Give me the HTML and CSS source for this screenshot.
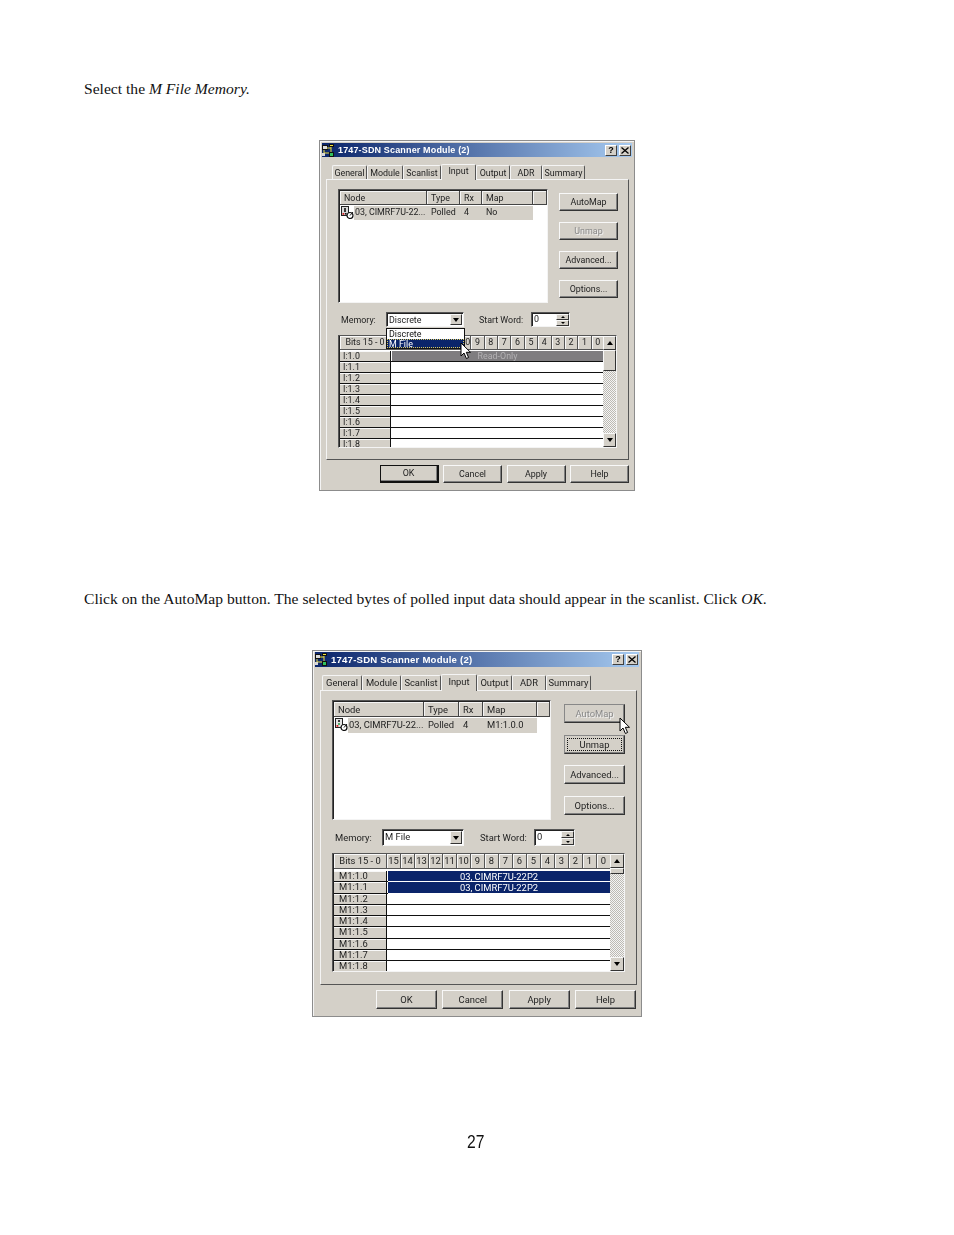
FILE: index.html
```html
<!DOCTYPE html>
<html lang="en">
<head>
<meta charset="utf-8">
<title>Page 27</title>
<link rel="stylesheet" href="styles.css">
</head>
<body>
<p class="para first">Select the <i>M File Memory.</i></p>
<section class="dialog d1">
  <header class="title">
    <svg class="app-icon" viewBox="0 0 14 13"><rect x="0" y="1" width="6" height="5" fill="#111"/><rect x="1" y="2" width="4" height="3" fill="#dcdcdc"/><rect x="7" y="0" width="5" height="3" fill="#111"/><rect x="8" y="1" width="3" height="1" fill="#f0e040"/><path d="M2 6v3h6M9 3v6M5 4h4" stroke="#f0e040" fill="none"/><rect x="7" y="8" width="5" height="5" fill="#111"/><rect x="8" y="9" width="3" height="3" fill="#30c060"/><rect x="0" y="9" width="3" height="3" fill="#d8d8d8"/></svg>
    <span class="title-text">1747-SDN Scanner Module (2)</span>
    <span class="cap">?</span>
    <span class="cap"><svg viewBox="0 0 8 7" class="cap-x"><path d="M0.5 0.5l7 6M7.5 0.5l-7 6" stroke="#000" stroke-width="1.3"/></svg></span>
  </header>
  <nav class="tabs">
    <span class="tab t1">General</span><span class="tab t2">Module</span><span class="tab t3">Scanlist</span><span class="tab t4 active">Input</span><span class="tab t5">Output</span><span class="tab t6">ADR</span><span class="tab t7">Summary</span>
  </nav>
  <div class="panel">
    <div class="top">
      <div class="list">
        <div class="list-head"><span class="lh c1">Node</span><span class="lh c2">Type</span><span class="lh c3">Rx</span><span class="lh c4">Map</span><span class="lh c5"></span></div>
        <div class="list-row">
          <svg class="node-icon" viewBox="0 0 14 13"><rect x="0.5" y="0.5" width="7" height="9" fill="#d8d8d8" stroke="#222"/><rect x="3.2" y="2" width="1.6" height="4" fill="#111"/><rect x="1.5" y="7" width="1.8" height="1.8" fill="#d02020"/><rect x="4" y="7" width="1.6" height="1.6" fill="#111"/><circle cx="9" cy="9.5" r="3" fill="#fff" stroke="#111" stroke-width="1.2"/><path d="M9 9.5l3-3.5" stroke="#111"/></svg>
          <span class="lc c1b">03, CIMRF7U-22...</span><span class="lc c2">Polled</span><span class="lc c3">4</span><span class="lc c4">No</span>
        </div>
      </div>
      <div class="side">
        <span class="btn">AutoMap</span>
        <span class="btn off">Unmap</span>
        <span class="btn">Advanced...</span>
        <span class="btn">Options...</span>
      </div>
    </div>
    <div class="mem">
      <span class="mem-label">Memory:</span>
      <span class="combo"><span class="combo-val">Discrete</span><span class="arrow-btn"><i class="tri down"></i></span></span>
      <span class="word-label">Start Word:</span>
      <span class="spin"><span class="spin-val">0</span><span class="spin-btns"><span class="spin-b"><i class="tri up small"></i></span><span class="spin-b"><i class="tri down small"></i></span></span></span>
    </div>
    <div class="grid">
      <div class="grid-main">
        <div class="grid-head"><span class="gh bits">Bits 15 - 0</span><span class="gh"></span><span class="gh"></span><span class="gh"></span><span class="gh"></span><span class="gh"></span><span class="gh gh-end">10</span><span class="gh">9</span><span class="gh">8</span><span class="gh">7</span><span class="gh">6</span><span class="gh">5</span><span class="gh">4</span><span class="gh">3</span><span class="gh">2</span><span class="gh">1</span><span class="gh">0</span></div>
        <div class="grid-row"><span class="addr">I:1.0</span><span class="cell"><span class="fill ro">Read-Only</span></span></div>
        <div class="grid-row"><span class="addr">I:1.1</span><span class="cell"></span></div>
        <div class="grid-row"><span class="addr">I:1.2</span><span class="cell"></span></div>
        <div class="grid-row"><span class="addr">I:1.3</span><span class="cell"></span></div>
        <div class="grid-row"><span class="addr">I:1.4</span><span class="cell"></span></div>
        <div class="grid-row"><span class="addr">I:1.5</span><span class="cell"></span></div>
        <div class="grid-row"><span class="addr">I:1.6</span><span class="cell"></span></div>
        <div class="grid-row"><span class="addr">I:1.7</span><span class="cell"></span></div>
        <div class="grid-row"><span class="addr">I:1.8</span><span class="cell"></span></div>
      </div>
      <div class="scroll"><span class="sb"><i class="tri up"></i></span><span class="thumb"></span><span class="track"></span><span class="sb"><i class="tri down"></i></span></div>
    </div>
    <div class="dropdown"><span class="opt">Discrete</span><span class="opt sel">M File</span></div>
    <svg class="cursor cur1" viewBox="0 0 12 18"><path d="M1 1v13l3-3 2.4 5.5 2.2-1L6.3 10.3H10.5z" fill="#fff" stroke="#000"/></svg>
  </div>
  <footer class="foot">
    <span class="btn default">OK</span><span class="btn">Cancel</span><span class="btn">Apply</span><span class="btn">Help</span>
  </footer>
</section>
<p class="para second">Click on the AutoMap button. The selected bytes of polled input data should appear in the scanlist. Click <i>OK</i>.</p>
<section class="dialog d2">
  <header class="title">
    <svg class="app-icon" viewBox="0 0 14 13"><rect x="0" y="1" width="6" height="5" fill="#111"/><rect x="1" y="2" width="4" height="3" fill="#dcdcdc"/><rect x="7" y="0" width="5" height="3" fill="#111"/><rect x="8" y="1" width="3" height="1" fill="#f0e040"/><path d="M2 6v3h6M9 3v6M5 4h4" stroke="#f0e040" fill="none"/><rect x="7" y="8" width="5" height="5" fill="#111"/><rect x="8" y="9" width="3" height="3" fill="#30c060"/><rect x="0" y="9" width="3" height="3" fill="#d8d8d8"/></svg>
    <span class="title-text">1747-SDN Scanner Module (2)</span>
    <span class="cap">?</span>
    <span class="cap"><svg viewBox="0 0 8 7" class="cap-x"><path d="M0.5 0.5l7 6M7.5 0.5l-7 6" stroke="#000" stroke-width="1.3"/></svg></span>
  </header>
  <nav class="tabs">
    <span class="tab t1">General</span><span class="tab t2">Module</span><span class="tab t3">Scanlist</span><span class="tab t4 active">Input</span><span class="tab t5">Output</span><span class="tab t6">ADR</span><span class="tab t7">Summary</span>
  </nav>
  <div class="panel">
    <div class="top">
      <div class="list">
        <div class="list-head"><span class="lh c1">Node</span><span class="lh c2">Type</span><span class="lh c3">Rx</span><span class="lh c4">Map</span><span class="lh c5"></span></div>
        <div class="list-row">
          <svg class="node-icon" viewBox="0 0 14 13"><rect x="0.5" y="0.5" width="7" height="9" fill="#e4e4e4" stroke="#222"/><rect x="3.2" y="2" width="1.6" height="2" fill="#111"/><rect x="3.2" y="5" width="1.6" height="2" fill="#30a050"/><rect x="1.5" y="7" width="1.8" height="1.8" fill="#d02020"/><circle cx="9" cy="9.5" r="3" fill="#fff" stroke="#111" stroke-width="1.2"/><path d="M9 9.5l3-3.5" stroke="#111"/></svg>
          <span class="lc c1b">03, CIMRF7U-22...</span><span class="lc c2">Polled</span><span class="lc c3">4</span><span class="lc c4">M1:1.0.0</span>
        </div>
      </div>
      <div class="side">
        <span class="btn off frame">AutoMap</span>
        <span class="btn focus"><span class="dots">Unmap</span></span>
        <span class="btn">Advanced...</span>
        <span class="btn">Options...</span>
      </div>
    </div>
    <div class="mem">
      <span class="mem-label">Memory:</span>
      <span class="combo"><span class="combo-val">M File</span><span class="arrow-btn"><i class="tri down"></i></span></span>
      <span class="word-label">Start Word:</span>
      <span class="spin"><span class="spin-val">0</span><span class="spin-btns"><span class="spin-b"><i class="tri up small"></i></span><span class="spin-b"><i class="tri down small"></i></span></span></span>
    </div>
    <div class="grid">
      <div class="grid-main">
        <div class="grid-head"><span class="gh bits">Bits 15 - 0</span><span class="gh">15</span><span class="gh">14</span><span class="gh">13</span><span class="gh">12</span><span class="gh">11</span><span class="gh">10</span><span class="gh">9</span><span class="gh">8</span><span class="gh">7</span><span class="gh">6</span><span class="gh">5</span><span class="gh">4</span><span class="gh">3</span><span class="gh">2</span><span class="gh">1</span><span class="gh">0</span></div>
        <div class="grid-row"><span class="addr">M1:1.0</span><span class="cell"><span class="fill mapped">03, CIMRF7U-22P2</span></span></div>
        <div class="grid-row"><span class="addr">M1:1.1</span><span class="cell"><span class="fill mapped">03, CIMRF7U-22P2</span></span></div>
        <div class="grid-row"><span class="addr">M1:1.2</span><span class="cell"></span></div>
        <div class="grid-row"><span class="addr">M1:1.3</span><span class="cell"></span></div>
        <div class="grid-row"><span class="addr">M1:1.4</span><span class="cell"></span></div>
        <div class="grid-row"><span class="addr">M1:1.5</span><span class="cell"></span></div>
        <div class="grid-row"><span class="addr">M1:1.6</span><span class="cell"></span></div>
        <div class="grid-row"><span class="addr">M1:1.7</span><span class="cell"></span></div>
        <div class="grid-row"><span class="addr">M1:1.8</span><span class="cell"></span></div>
      </div>
      <div class="scroll"><span class="sb"><i class="tri up"></i></span><span class="thumb"></span><span class="track"></span><span class="sb"><i class="tri down"></i></span></div>
    </div>
    <svg class="cursor cur2" viewBox="0 0 12 18"><path d="M1 1v13l3-3 2.4 5.5 2.2-1L6.3 10.3H10.5z" fill="#fff" stroke="#000"/></svg>
  </div>
  <footer class="foot">
    <span class="btn">OK</span><span class="btn">Cancel</span><span class="btn">Apply</span><span class="btn">Help</span>
  </footer>
</section>
<p class="page-no">27</p>
</body>
</html>
```
FILE: styles.css
```css
* { box-sizing: border-box; }
html, body { margin: 0; padding: 0; background: #fff; }
body { padding-top: 80px; height: 1235px; overflow: hidden; font-family: "Liberation Serif", serif; color: #111; }
.para { margin: 0; padding-left: 84px; font-size: 15.6px; line-height: 17px; white-space: nowrap; }
.second { margin-top: 99px; }
.page-no { margin: 115px 0 0; padding-right: 3px; text-align: center; font: 18px/20px "Liberation Sans", sans-serif; transform: scaleX(0.87); }

.dialog { position: relative; margin: 0 auto; background: #d4d0c8; border: 1px solid #8c8c8c; box-shadow: inset 1px 1px 0 #f4f4f4; font-family: Roboto, "Liberation Sans", sans-serif; color: #222; filter: blur(0.3px); display: flex; flex-direction: column; overflow: hidden; }
.d1 { width: 316px; height: 351px; margin-top: 43px; padding: 2px 2px 0; font-size: 8.9px; --bit: 13.375px; --addr: 51px; --rowh: 11px; }
.d2 { width: 330px; height: 367px; margin-top: 43px; padding: 1px 2px 0; font-size: 9.4px; --bit: 14px; --addr: 53px; --rowh: 11.3px; }

.title { display: flex; align-items: center; background: linear-gradient(90deg, #0a246a, #a6caf0); color: #fff; font-family: "Liberation Sans", sans-serif; font-weight: bold; flex: none; padding-right: 1px; gap: 2px; }
.d1 .title { height: 14px; font-size: 9px; }
.d2 .title { height: 15px; font-size: 9.6px; }
.app-icon { width: 14px; height: 13px; flex: none; }
.title-text { flex: 1; letter-spacing: 0.15px; white-space: nowrap; }
.d2 .title-text { letter-spacing: 0.2px; }
.cap { flex: none; width: 12px; height: 11px; background: #d4d0c8; color: #000; border: 1px solid; border-color: #fff #404040 #404040 #fff; display: flex; align-items: center; justify-content: center; font-size: 9px; line-height: 1; }
.cap-x { width: 8px; height: 7px; }

.tabs { display: flex; align-items: flex-end; flex: none; margin-top: 6px; }
.d1 .tabs { height: 16px; padding-left: 10px; }
.d2 .tabs { height: 17px; padding-left: 7px; }
.tab { height: 14px; flex: none; text-align: center; line-height: 14px; white-space: nowrap; border-top: 1px solid #f4f4f4; border-left: 1px solid #f4f4f4; border-right: 1px solid #555; border-radius: 2px 2px 0 0; }
.d2 .tab { height: 15px; line-height: 14px; }
.tab.active { height: 16px; line-height: 12px; position: relative; z-index: 1; margin-bottom: -1px; background: #d4d0c8; }
.d2 .tab.active { height: 17px; line-height: 14px; }
.d1 .t1 { width: 35px; } .d1 .t2 { width: 36px; } .d1 .t3 { width: 38px; } .d1 .t4 { width: 35px; } .d1 .t5 { width: 34px; } .d1 .t6 { width: 32px; } .d1 .t7 { width: 43px; }
.d2 .t1 { width: 40px; } .d2 .t2 { width: 39px; } .d2 .t3 { width: 40px; } .d2 .t4 { width: 36px; } .d2 .t5 { width: 35px; } .d2 .t6 { width: 34px; } .d2 .t7 { width: 45px; }

.panel { position: relative; flex: none; border: 1px solid; border-color: #f4f4f4 #555 #555 #f4f4f4; }
.d1 .panel { width: 303px; height: 281px; margin-left: 4px; padding: 9px 0 0 11px; }
.d2 .panel { width: 317px; height: 295px; margin-left: 5px; padding: 9px 0 0 11px; }

.top { display: flex; }
.d1 .top { gap: 11px; }
.d2 .top { gap: 13px; }
.list { background: #fff; border: 1px solid; border-color: #555 #f4f4f4 #f4f4f4 #555; box-shadow: inset 1px 1px 0 #222; padding: 1px 0 0 1px; }
.d1 .list { width: 210px; height: 114px; }
.d2 .list { width: 219px; height: 120px; }
.list-head { display: flex; background: #d4d0c8; }
.d1 .list-head { height: 14px; }
.d2 .list-head { height: 15px; }
.lh { flex: none; line-height: 14px; padding-left: 4px; border-right: 1px solid #444; border-bottom: 1px solid #444; box-shadow: inset 1px 1px 0 #f4f4f4; white-space: nowrap; }
.d2 .lh { line-height: 15px; }
.d1 .c1 { width: 87px; } .d1 .c2 { width: 33px; } .d1 .c3 { width: 22px; } .d1 .c4 { width: 51px; } .d1 .c5 { width: 14px; }
.d2 .c1 { width: 90px; } .d2 .c2 { width: 35px; } .d2 .c3 { width: 24px; } .d2 .c4 { width: 54px; } .d2 .c5 { width: 13px; }
.list-row { display: flex; align-items: center; position: relative; }
.d1 .list-row { height: 14px; margin-top: 1px; padding-left: 14px; }
.d2 .list-row { height: 15px; margin-top: 1px; padding-left: 14px; }
.lc { flex: none; background: #d4d0c8; height: 100%; line-height: 13px; padding-left: 4px; white-space: nowrap; }
.d2 .lc { line-height: 14px; }
.c1b { padding-left: 1px; }
.d1 .c1b { width: 73px; } .d2 .c1b { width: 76px; }
.d1 .lc.c4 { width: 51px; } .d2 .lc.c4 { width: 54px; }
.node-icon { position: absolute; left: 1px; top: 0; width: 14px; height: 13px; }

.side { display: flex; flex-direction: column; padding-top: 4px; }
.d1 .side { gap: 11px; }
.d2 .side { gap: 11.7px; }
.btn { display: flex; align-items: center; justify-content: center; flex: none; background: #d4d0c8; border: 1px solid; border-color: #f8f8f8 #333 #333 #f8f8f8; box-shadow: inset -1px -1px 0 #808080; white-space: nowrap; padding-bottom: 1px; }
.d1 .btn { width: 59px; height: 18px; }
.d2 .btn { width: 61px; height: 19px; }
.btn.off { color: #8a8a8a; text-shadow: 1px 1px 0 #f0f0f0; }
.btn.frame { border-color: #888 #333 #333 #888; }
.btn.default { border: 1px solid #111; border-right-width: 2px; border-bottom-width: 2px; }
.btn.focus { border-color: #888 #333 #333 #888; padding: 2px; }
.dots { flex: 1; align-self: stretch; display: flex; align-items: center; justify-content: center; border: 1px dotted #111; }

.mem { display: flex; align-items: center; margin-top: 9px; }
.d1 .mem { height: 15px; }
.d2 .mem { height: 17px; }
.mem-label { padding-left: 3px; flex: none; }
.d1 .mem-label { width: 48px; } .d2 .mem-label { width: 50px; }
.combo { display: flex; background: #fff; border: 1px solid; border-color: #555 #f4f4f4 #f4f4f4 #555; box-shadow: inset 1px 1px 0 #222; height: 100%; flex: none; padding: 1px 1px 1px 2px; }
.d1 .combo { width: 78px; } .d2 .combo { width: 82px; }
.combo-val { flex: 1; line-height: 12px; }
.arrow-btn, .sb { background: #d4d0c8; border: 1px solid; border-color: #f8f8f8 #333 #333 #f8f8f8; display: flex; align-items: center; justify-content: center; flex: none; }
.arrow-btn { width: 12px; }
.word-label { flex: none; white-space: nowrap; }
.d1 .word-label { width: 52px; margin-left: 15px; } .d2 .word-label { width: 54px; margin-left: 16px; }
.spin { display: flex; height: 100%; flex: none; background: #fff; border: 1px solid; border-color: #555 #f4f4f4 #f4f4f4 #555; box-shadow: inset 1px 1px 0 #222; padding: 1px 0 0 2px; }
.d1 .spin { width: 39px; } .d2 .spin { width: 41px; }
.spin-val { flex: 1; line-height: 11px; }
.spin-btns { display: flex; flex-direction: column; flex: none; width: 13px; background: #d4d0c8; }
.spin-b { flex: 1; background: #d4d0c8; border: 1px solid; border-color: #f8f8f8 #333 #333 #f8f8f8; display: flex; align-items: center; justify-content: center; }
.tri { display: block; width: 0; height: 0; border-style: solid; border-color: transparent; border-width: 0 3.5px; }
.tri.down { border-top: 4px solid #000; }
.tri.up { border-bottom: 4px solid #000; }
.tri.small { border-width: 0 2px; }
.tri.small.down { border-top: 2px solid #000; }
.tri.small.up { border-bottom: 2px solid #000; }

.grid { display: flex; background: #fff; border: 1px solid; border-color: #555 #f4f4f4 #f4f4f4 #555; overflow: hidden; }
.d1 .grid { width: 279px; height: 113px; margin-top: 8px; }
.d2 .grid { width: 293px; height: 119px; margin-top: 7px; }
.grid-main { flex: 1; min-width: 0; overflow: hidden; padding-left: 1px; box-shadow: inset 1px 0 0 #222; }
.grid-head { display: flex; background: #d4d0c8; margin-bottom: 1px; }
.d1 .grid-head { height: 14px; }
.d2 .grid-head { height: 15px; margin-bottom: 2px; }
.gh { flex: none; width: var(--bit); text-align: center; line-height: 13px; border-right: 1px solid #555; border-bottom: 1px solid #555; box-shadow: inset 1px 1px 0 #f8f8f8; white-space: nowrap; overflow: hidden; }
.d2 .gh { line-height: 14px; }
.gh.bits { width: var(--addr); }
.gh-end { text-align: right; }
.grid-row { display: flex; height: var(--rowh); border-bottom: 1px solid #111; background: #fff; }
.addr { flex: none; width: var(--addr); background: #d4d0c8; padding-left: 3px; line-height: 10px; border-right: 1px solid #111; box-shadow: inset 0 1px 0 #f8f8f8; white-space: nowrap; }
.d2 .addr { padding-left: 5px; }
.cell { flex: 1; min-width: 0; display: flex; }
.fill { flex: 1; text-align: center; line-height: 11px; margin-left: 1px; white-space: nowrap; overflow: hidden; }
.ro { background: #7f7d80; color: #b4b2b4; }
.mapped { background: #0a246a; color: #fff; box-shadow: 0 1px 0 #fff; }
.scroll { flex: none; display: flex; flex-direction: column; }
.d1 .scroll { width: 13px; } .d2 .scroll { width: 14px; }
.sb { height: 14px; }
.thumb { flex: none; background: #d4d0c8; border: 1px solid; border-color: #f8f8f8 #333 #333 #f8f8f8; }
.d1 .thumb { height: 21px; } .d2 .thumb { height: 6px; }
.track { flex: 1; background: repeating-conic-gradient(#f4f4f4 0 25%, #bdbab3 0 50%) 0 0 / 2px 2px; }

.dropdown { position: absolute; background: #fff; border: 1px solid #111; z-index: 3; display: flex; flex-direction: column; color: #111; }
.d1 .dropdown { left: 59px; top: 148px; width: 79px; height: 21px; }
.opt { height: 9.5px; line-height: 10px; padding-left: 2px; }
.opt.sel { background: #0a246a; color: #fff; outline: 1px dotted #d8c860; outline-offset: -1px; }
.cursor { position: absolute; z-index: 4; width: 12px; height: 18px; }
.cur1 { left: 133px; top: 162px; }
.cur2 { left: 298px; top: 26px; }

.foot { display: flex; justify-content: flex-end; margin-top: 5px; }
.d1 .foot { gap: 4.5px; width: 307px; }
.d2 .foot { gap: 5.34px; width: 321px; }
```
